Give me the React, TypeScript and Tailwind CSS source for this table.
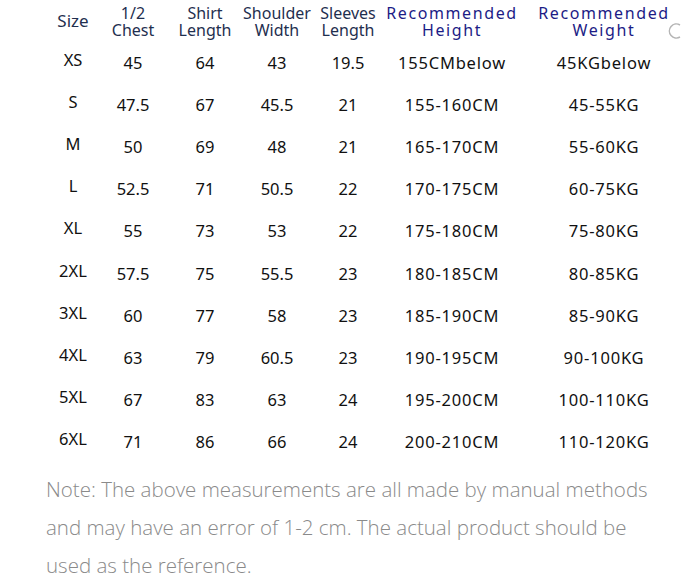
import React from "react";

const rows: string[][] = [
  ["XS", "45", "64", "43", "19.5", "155CMbelow", "45KGbelow"],
  ["S", "47.5", "67", "45.5", "21", "155-160CM", "45-55KG"],
  ["M", "50", "69", "48", "21", "165-170CM", "55-60KG"],
  ["L", "52.5", "71", "50.5", "22", "170-175CM", "60-75KG"],
  ["XL", "55", "73", "53", "22", "175-180CM", "75-80KG"],
  ["2XL", "57.5", "75", "55.5", "23", "180-185CM", "80-85KG"],
  ["3XL", "60", "77", "58", "23", "185-190CM", "85-90KG"],
  ["4XL", "63", "79", "60.5", "23", "190-195CM", "90-100KG"],
  ["5XL", "67", "83", "63", "24", "195-200CM", "100-110KG"],
  ["6XL", "71", "86", "66", "24", "200-210CM", "110-120KG"],
];

const headers = [
  ["Size"],
  ["1/2", "Chest"],
  ["Shirt", "Length"],
  ["Shoulder", "Width"],
  ["Sleeves", "Length"],
];

export default function App() {
  return (
    <div className="relative w-[681px] h-[579px] overflow-hidden bg-white">
      <div className="pl-[46px] pt-[3px]">
        <div
          className="grid grid-cols-[54px_66px_78px_66px_76px_132px_172px] text-[#111]"
          style={{ fontFamily: '"Noto Sans", "DejaVu Sans", sans-serif' }}
        >
          {headers.map((h, i) => (
            <div
              key={i}
              className={
                "h-[38px] flex items-center justify-center text-center leading-[17px] text-[#1f2f4f] " +
                (i === 0 ? "text-[17px] pb-[3px]" : "text-[16px]")
              }
            >
              <p>
                {h[0]}
                {h[1] ? (
                  <>
                    <br />
                    {h[1]}
                  </>
                ) : null}
              </p>
            </div>
          ))}
          <div className="h-[38px] flex items-center justify-center text-center text-[16px] leading-[17px] tracking-[1.6px] text-[#1c1c86]">
            <p>
              Recommended
              <br />
              Height
            </p>
          </div>
          <div className="h-[38px] flex items-center justify-center text-center text-[16px] leading-[17px] tracking-[1.6px] text-[#1c1c86]">
            <p>
              Recommended
              <br />
              Weight
            </p>
          </div>
          {rows.map((r, ri) =>
            r.map((c, ci) => (
              <div
                key={ri + "-" + ci}
                className={
                  "h-[42.2px] flex items-center justify-center text-[16.5px] " +
                  (ci === 0 ? "pb-[4px]" : "pt-[2px]") +
                  (ci >= 5 ? " tracking-[0.8px]" : "")
                }
              >
                {c}
              </div>
            ))
          )}
        </div>
      </div>
      <p
        className="mt-[7px] ml-[46px] w-[622px] text-[20.5px] leading-[38px] font-light text-[#8a8a8a]"
        style={{ fontFamily: '"Open Sans", "Noto Sans", sans-serif' }}
      >
        Note: The above measurements are all made by manual methods and may have an error of 1-2 cm. The actual product should be used as the reference.
      </p>
      <svg className="absolute left-[668px] top-[22px]" width="16" height="18" viewBox="0 0 16 18">
        <path d="M12 3 A7 7 0 1 0 12 15" fill="none" stroke="#b5b5b5" strokeWidth="1.5" />
      </svg>
    </div>
  );
}
